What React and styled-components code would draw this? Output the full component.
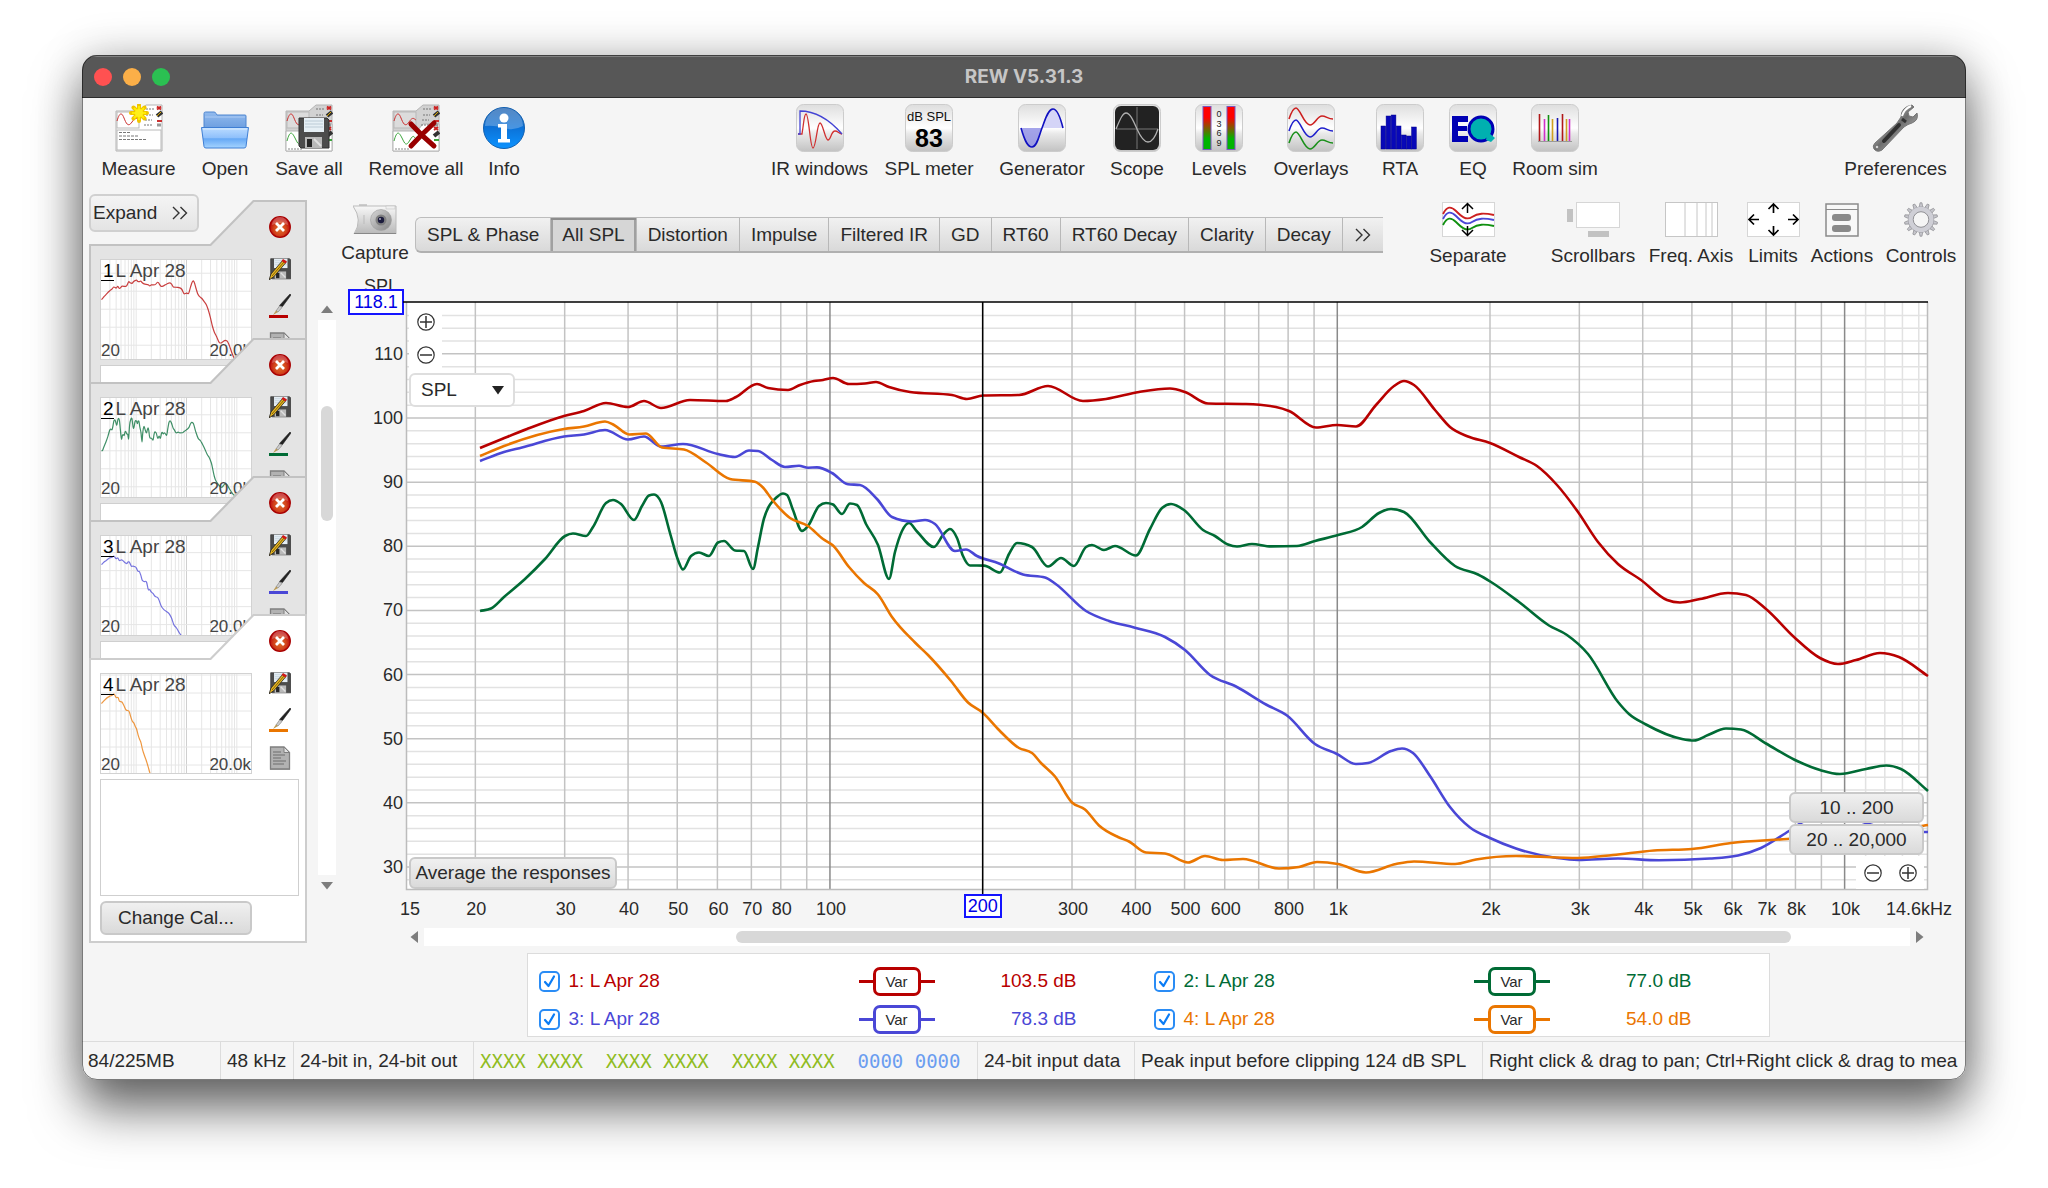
import React, { useState } from 'react';
import styled, { createGlobalStyle } from 'styled-components';

const RED = '#b80000';
const GREEN = '#006b35';
const BLUE = '#4a47d6';
const ORANGE = '#ea7600';

// plot space: three decades from 14.6 Hz to 14.6 kHz, 118.1 dB at the top
const PLOT_W = 1522;
const PLOT_H = 588;
const DECADE = PLOT_W / 3;
const F_START = Math.log10(14.6);
const xOf = (hz) => (Math.log10(hz) - F_START) * DECADE;
const yOf = (db) => 116 + (100 - db) * 6.414;

const traces = {
    red: [[74, 146], [96, 137], [121, 127], [158, 114], [178, 109], [200, 101], [222, 105], [238, 99], [255, 106], [284, 98], [320, 99], [330, 95], [351, 82], [362, 86], [382, 88], [394, 83], [408, 79], [417, 78], [427, 76], [443, 82], [459, 81.5], [470, 80], [483, 85], [504, 90], [546, 93], [561, 97], [577, 93.5], [613, 93], [642, 84], [677, 99], [700, 97], [733, 90], [764, 86.5], [779, 90], [802, 101.5], [840, 102], [870, 105], [883, 109], [910, 125.5], [931, 123], [950, 124.5], [970, 103], [988, 84], [998, 79], [1008, 83], [1029, 108], [1044, 125], [1062, 134.5], [1084, 141], [1113, 155], [1131, 164], [1151, 183], [1172, 210], [1192, 240], [1212, 262], [1235, 278], [1261, 298], [1274, 300.5], [1294, 297], [1322, 291], [1340, 293], [1360, 307], [1388, 335], [1414, 356], [1432, 362], [1450, 358], [1474, 351], [1493, 355], [1522, 374]],
    green: [[74, 309], [85, 306.5], [98, 295], [119, 277], [139, 257], [159, 234], [167, 231.5], [180, 234], [187, 225], [200, 201], [207, 198], [215, 202], [228, 218], [236, 204], [243, 193.5], [248, 192.5], [255, 200], [264, 231], [272, 258], [277, 267.5], [285, 254], [293, 250.5], [303, 254], [312, 240.5], [318, 239], [329, 248.5], [338, 249], [347, 267], [352, 245], [358, 216.5], [371, 195], [377, 191.5], [381, 193], [387, 208], [396, 229], [402, 224], [413, 204], [420, 201], [427, 202.5], [436, 212], [444, 201.5], [451, 203], [460, 222], [472, 243], [483, 277], [489, 250], [496, 229], [503, 221], [511, 229.5], [528, 245], [537, 233], [544, 227], [551, 236], [557, 254], [564, 263.5], [578, 263.6], [594, 270.5], [603, 252], [611, 241], [626, 245], [642, 264.5], [655, 256], [668, 264], [680, 245], [686, 243], [698, 248], [709, 244], [730, 253.5], [744, 227], [756, 206], [765, 202], [778, 208], [797, 228], [809, 234], [822, 242.5], [831, 244.5], [846, 242], [865, 244.4], [891, 244], [909, 239], [932, 233], [956, 225], [973, 211], [985, 207], [998, 210], [1024, 240], [1049, 264], [1072, 272.5], [1085, 280], [1113, 300], [1143, 323.5], [1161, 333], [1182, 352], [1212, 400], [1223, 412], [1240, 422.5], [1276, 437], [1288, 438.5], [1302, 433], [1320, 426.5], [1335, 427.5], [1360, 441.5], [1388, 457.5], [1414, 468], [1434, 472], [1460, 467], [1480, 463.5], [1495, 467], [1522, 489]],
    blue: [[74, 159], [98, 150], [116, 145.5], [158, 134.5], [178, 132.5], [199, 128], [222, 137.5], [238, 134.5], [255, 144.5], [277, 142], [312, 152], [329, 155], [343, 148.5], [352, 149], [366, 158], [379, 165], [393, 163.7], [402, 165.7], [411, 165.4], [426, 171], [442, 182.3], [454, 183], [471, 197], [486, 215], [506, 219.5], [519, 218], [529, 222], [549, 249], [560, 247.5], [571, 254], [593, 261.5], [617, 272.5], [639, 275.5], [649, 281.5], [680, 309], [703, 319], [728, 325.5], [759, 335], [779, 348], [804, 373], [830, 384.5], [860, 402.5], [881, 413.5], [909, 442], [931, 452], [950, 462], [962, 461], [985, 449], [996, 446.5], [1007, 451], [1024, 474], [1044, 505], [1064, 525.5], [1084, 536], [1110, 546.5], [1151, 556], [1172, 558], [1212, 556.5], [1253, 558.3], [1304, 556.5], [1332, 553.5], [1355, 546], [1383, 529], [1401, 518], [1432, 513], [1460, 521], [1488, 529], [1522, 530]],
    orange: [[74, 154], [98, 144], [158, 127], [178, 124.5], [199, 119.5], [208, 123], [223, 132.5], [240, 131.5], [256, 145.5], [278, 147.5], [300, 160.5], [324, 177], [349, 179.7], [357, 185.5], [366, 197.5], [384, 216], [402, 224], [417, 237], [427, 243.5], [443, 265], [458, 281], [472, 292.5], [486, 315], [509, 340.5], [522, 353], [545, 379], [562, 400.5], [577, 411], [593, 428], [613, 446], [626, 451], [635, 461], [649, 474.5], [666, 500.5], [679, 507.5], [693, 523.5], [712, 535], [723, 539.5], [740, 550.5], [759, 551.5], [782, 560.5], [799, 554], [817, 558], [837, 557], [873, 566.5], [893, 565], [911, 560], [932, 562], [960, 570.5], [990, 562], [1008, 559.5], [1049, 562], [1070, 557.5], [1110, 554], [1172, 556], [1207, 553], [1248, 548.5], [1286, 547], [1325, 541], [1381, 537], [1437, 532.5], [1488, 528], [1522, 523]],
};

const measurements = [
    { id: 1, name: 'L Apr 28', color: RED, points: traces.red, value: '103.5 dB' },
    { id: 2, name: 'L Apr 28', color: GREEN, points: traces.green, value: '77.0 dB' },
    { id: 3, name: 'L Apr 28', color: BLUE, points: traces.blue, value: '78.3 dB' },
    { id: 4, name: 'L Apr 28', color: ORANGE, points: traces.orange, value: '54.0 dB' },
];

const xLabels = [
    [14.8, '15'], [20, '20'], [30, '30'], [40, '40'], [50, '50'], [60, '60'], [70, '70'], [80, '80'], [100, '100'],
    [300, '300'], [400, '400'], [500, '500'], [600, '600'], [800, '800'], [1000, '1k'], [2000, '2k'], [3000, '3k'],
    [4000, '4k'], [5000, '5k'], [6000, '6k'], [7000, '7k'], [8000, '8k'], [10000, '10k'], [13950, '14.6kHz'],
];

const tabs = ['SPL & Phase', 'All SPL', 'Distortion', 'Impulse', 'Filtered IR', 'GD', 'RT60', 'RT60 Decay', 'Clarity', 'Decay'];

// monotone cubic, so the peaks stay where the points are
const smoothPath = (pts) => {
    const n = pts.length;
    const h = [];
    const slope = [];
    for (let i = 0; i < n - 1; i++) {
        h.push(pts[i + 1][0] - pts[i][0]);
        slope.push((pts[i + 1][1] - pts[i][1]) / h[i]);
    }
    const m = pts.map((_, i) => {
        if (i === 0) return slope[0];
        if (i === n - 1) return slope[n - 2];
        const a = slope[i - 1];
        const b = slope[i];
        const p = (a * h[i] + b * h[i - 1]) / (h[i - 1] + h[i]);
        return (Math.sign(a) + Math.sign(b)) * Math.min(Math.abs(a), Math.abs(b), Math.abs(p) / 2);
    });
    let d = `M${pts[0][0]} ${pts[0][1]}`;
    for (let i = 0; i < n - 1; i++) {
        const t = h[i] / 3;
        d += `C${pts[i][0] + t} ${pts[i][1] + m[i] * t} ${pts[i + 1][0] - t} ${pts[i + 1][1] - m[i + 1] * t} ${pts[i + 1][0]} ${pts[i + 1][1]}`;
    }
    return d;
};

/* ---------- icons ---------- */

const Tile = ({ children }) => (
    <svg width="48" height="48" viewBox="0 0 48 48">
        <defs>
            <linearGradient id="tile" x1="0" y1="0" x2="0" y2="1">
                <stop offset="0" stopColor="#dedede" />
                <stop offset=".5" stopColor="#ffffff" />
                <stop offset=".62" stopColor="#e9e9e9" />
                <stop offset="1" stopColor="#c2c2c2" />
            </linearGradient>
        </defs>
        <rect x=".5" y=".5" width="47" height="47" rx="7" fill="url(#tile)" stroke="#cccccc" />
        {children}
    </svg>
);

const PanelArt = ({ gray }) => (
    <>
        <path d="M1 7H24L31 1H47V47H1Z" fill={gray ? '#d2d2d2' : '#fff'} stroke="#b4b4b4" />
        {gray && <path d="M1 27H25L31 20H47V47H1Z" fill="#fff" stroke="#b4b4b4" />}
        <rect x="2" y="8" width="22" height="16" fill={gray ? '#dcdcdc' : '#fff'} stroke="#b9b9b9" />
        <path d="M2 17C5 7 7 9 9 14S13 24 17 18S22 15 24 16" fill="none" stroke="#cc3030" />
        <g stroke="#777" strokeWidth="1">
            <path d="M31 5h8M31 11h7M30 16h7M29 21h8" strokeDasharray="2 1" />
        </g>
        <g strokeWidth="2">
            <path d="M42 2.500l4 3M46 2.500l-4 3" stroke="#cc2020" />
            <path d="M42 12l5-4" stroke="#333" strokeWidth="4" />
            <path d="M42 12l4-4" stroke="#d9a800" strokeWidth="1" />
            <path d="M42 17h5" stroke="#cc3030" />
            <path d="M42 21h4" stroke="#999" strokeWidth="3" />
        </g>
        {gray ? (
            <>
                <path d="M2 37C5 26 7 28 10 34S14 43 18 36S22 34 24 35" fill="none" stroke="#3ba53b" />
                <path d="M3 45h14" stroke="#888" strokeDasharray="2 1" />
                <path d="M42 23l4 3M46 23l-4 3" stroke="#cc2020" strokeWidth="2" />
                <path d="M42 32l5-4" stroke="#333" strokeWidth="4" />
                <path d="M42 36h5" stroke="#3ba53b" strokeWidth="2" />
            </>
        ) : (
            <>
                <rect x="2" y="26" width="44" height="20" fill="#fff" stroke="#b9b9b9" />
                <path d="M4 28.500h12M4 32h19M4 35.500h28" stroke="#777" strokeDasharray="3 1" />
            </>
        )}
    </>
);

const MeasureIcon = () => (
    <svg width="48" height="48" viewBox="0 0 48 48">
        <PanelArt />
        <path d="M24 1v16M16 9h16M18.500 3.500l11 11M29.500 3.500l-11 11" stroke="#f0c400" strokeWidth="4" strokeLinecap="round" />
        <path d="M24 2v14M17 9h14M19 4l10 10M29 4L19 14" stroke="#ffee00" strokeWidth="2" />
        <circle cx="24" cy="9" r="4" fill="#fff01a" />
    </svg>
);

const OpenIcon = () => (
    <svg width="48" height="48" viewBox="0 0 48 48">
        <defs>
            <linearGradient id="folder" x1="0" y1="0" x2="0" y2="1">
                <stop offset="0" stopColor="#bcdcff" />
                <stop offset=".5" stopColor="#8fc0fb" />
                <stop offset=".55" stopColor="#66a8f5" />
                <stop offset="1" stopColor="#a5d4ff" />
            </linearGradient>
            <linearGradient id="folderBack" x1="0" y1="0" x2="0" y2="1">
                <stop offset="0" stopColor="#93bbee" />
                <stop offset="1" stopColor="#6d9fe0" />
            </linearGradient>
        </defs>
        <path d="M3 24V9.500Q3 8 4.500 8H13Q14.500 8 15 9.500L16 11H44Q45 11 45 12V24Z" fill="url(#folderBack)" stroke="#4f86d0" />
        <path d="M4 13H44" stroke="#abcbf5" />
        <path d="M.5 23.500H47.500L45 42.500Q44.800 44 43 44H5Q3.200 44 3 42.500Z" fill="url(#folder)" stroke="#3e7ed4" />
        <path d="M2 25H46" stroke="#d9ecff" strokeWidth="1" />
    </svg>
);

const Floppy = ({ x = 0, y = 0, s = 32 }) => (
    <g transform={`translate(${x} ${y}) scale(${s / 32})`}>
        <path d="M1 1H29L31 3V31H3L1 29Z" fill="#4c4c4c" stroke="#303030" />
        <rect x="6" y="1" width="20" height="14" fill="#e6eff5" />
        <path d="M7 4H25M7 7H25M7 10H25" stroke="#bccbd6" />
        <rect x="7" y="20" width="17" height="11" fill="#b9b9b9" />
        <rect x="9" y="22" width="5" height="8" fill="#262626" />
        <path d="M16 22l7 7" stroke="#e0e0e0" strokeWidth="2" />
    </g>
);

const SaveIcon = () => (
    <svg width="48" height="48" viewBox="0 0 48 48">
        <PanelArt gray />
        <Floppy x={13} y={13} s={32} />
    </svg>
);

const RemoveIcon = () => (
    <svg width="48" height="48" viewBox="0 0 48 48">
        <PanelArt gray />
        <path d="M19 20Q30 32 42 42M42 19Q31 29 19 42" fill="none" stroke="#990000" strokeWidth="5" strokeLinecap="round" />
    </svg>
);

const InfoIcon = () => (
    <svg width="48" height="48" viewBox="0 0 48 48">
        <defs>
            <linearGradient id="info" x1="0" y1="0" x2="0" y2="1">
                <stop offset="0" stopColor="#1c5fae" />
                <stop offset=".5" stopColor="#0c72d8" />
                <stop offset="1" stopColor="#0c93ff" />
            </linearGradient>
        </defs>
        <circle cx="24" cy="24" r="20.500" fill="url(#info)" stroke="#1260b0" />
        <path d="M5 22A19 18 0 0 1 43 22Q34 27 24 24T5 22Z" fill="#fff" opacity=".25" />
        <circle cx="24" cy="14" r="4.500" fill="#fff" />
        <path d="M18 20H27V35H30V38.500H18V35H21V23.500H18Z" fill="#fff" />
    </svg>
);

const IrIcon = () => (
    <Tile>
        <path d="M2 30H6C8 18 8 10 10 10C13 10 14 44 17 44C20 44 21 19 24 19C27 19 29 36 32 36C35 36 35 27 39 27C42 27 42 29 46 30" fill="none" stroke="#d03030" strokeWidth="1.300" />
        <path d="M2 30H4V7C20 7 33 15 46 30" fill="none" stroke="#4444d4" strokeWidth="1.300" />
    </Tile>
);

const SplIcon = () => (
    <Tile>
        <text x="24" y="17" textAnchor="middle" fontSize="13" fill="#111">dB SPL</text>
        <text x="24" y="43" textAnchor="middle" fontSize="25" fontWeight="700" fill="#000">83</text>
    </Tile>
);

const GeneratorIcon = () => (
    <Tile>
        <path d="M3 24C7 38 10 43 14 43C19 43 21 32 24 24Z" fill="#8f8fe6" opacity=".8" />
        <path d="M24 24C27 14 30 5 35 5C39 5 42 12 45 24Z" fill="#d4d4f7" />
        <path d="M3 24C7 38 10 43 14 43C19 43 21 32 24 24S30 5 35 5C39 5 42 12 45 24" fill="none" stroke="#1010c0" strokeWidth="1.600" />
    </Tile>
);

const ScopeIcon = () => (
    <Tile>
        <rect x="2" y="2" width="44" height="44" rx="6" fill="#222" />
        <path d="M24 3V45M3 25H45" stroke="#777" />
        <path d="M3 25C8 13 10 9 13 9C17 9 20 16 24 25S31 38 35 38C39 38 42 34 45 25" fill="none" stroke="#b0b0b0" strokeWidth="1.300" />
    </Tile>
);

const LevelsIcon = () => (
    <Tile>
        <defs>
            <linearGradient id="level" x1="0" y1="0" x2="0" y2="1">
                <stop offset=".25" stopColor="#ff0000" />
                <stop offset=".75" stopColor="#00b400" />
            </linearGradient>
        </defs>
        <rect x="8" y="2.500" width="8" height="43" fill="url(#level)" stroke="#7a55c0" />
        <rect x="32" y="2.500" width="8" height="43" fill="url(#level)" stroke="#7a55c0" />
        <g fontSize="9" fill="#222" textAnchor="middle">
            <text x="24" y="13">0</text>
            <text x="24" y="23">3</text>
            <text x="24" y="32">6</text>
            <text x="24" y="42">9</text>
        </g>
    </Tile>
);

const OverlaysIcon = () => (
    <Tile>
        {[['#cc2020', 0], ['#2020cc', 12], ['#1a901a', 24]].map(([c, dy]) => (
            <path key={c} d={`M2 ${15 + dy}C5 ${6 + dy} 7 ${4 + dy} 9 ${4 + dy}C13 ${4 + dy} 17 ${21 + dy} 23 ${21 + dy}C28 ${21 + dy} 30 ${12 + dy} 35 ${12 + dy}C39 ${12 + dy} 41 ${15 + dy} 46 ${15 + dy}`} fill="none" stroke={c} strokeWidth="1.600" />
        ))}
    </Tile>
);

const RtaIcon = () => (
    <Tile>
        {[22, 12, 11, 22, 31, 32, 23].map((top, i) => (
            <rect key={i} x={5 + i * 5.1} y={top} width="4.700" height={45 - top} fill="#0808b8" stroke="#00008c" strokeWidth=".5" />
        ))}
    </Tile>
);

const EqIcon = () => (
    <Tile>
        <path d="M3 12H19V18H9V22H18V27H9V32H19V38H3Z" fill="#0000b4" />
        <circle cx="32" cy="25" r="12" fill="#00b0b0" stroke="#0000b4" strokeWidth="3" />
        <path d="M38 31l2-2 6 5-4 4-5-2z" fill="#00b0b0" />
    </Tile>
);

const RoomIcon = () => (
    <Tile>
        <path d="M7 37.500H41" stroke="#999" />
        {[[8, 10, '#b01818'], [13, 15, '#d030c8'], [17, 11, '#109010'], [21, 15, '#d0a020'], [26, 14, '#1818b0'], [31, 10, '#b01818'], [35, 15, '#d0a020'], [38, 15, '#d030c8']].map(([x, y, c]) => (
            <path key={x} d={`M${x}.500 ${y}V37`} stroke={c} strokeWidth="1.600" />
        ))}
    </Tile>
);

const WrenchIcon = () => (
    <svg width="48" height="48" viewBox="0 0 48 48">
        <defs>
            <linearGradient id="wrench" x1="0" y1="0" x2="1" y2="1">
                <stop offset=".2" stopColor="#d8d8d8" />
                <stop offset=".5" stopColor="#6c6c6c" />
                <stop offset=".8" stopColor="#b4b4b4" />
            </linearGradient>
        </defs>
        <path d="M29 13Q29 3 40 1L42 3L36 8L37 12L41 13L45 9Q47 16 40 19Q36 20 32 23L10 46Q5 49 2 45Q0 42 3 39L25 19Z" fill="url(#wrench)" stroke="#777" />
        <path d="M27 21L12 37" stroke="#303030" strokeWidth="4" strokeLinecap="round" />
        <path d="M30 12Q32 5 39 2" stroke="#fff" strokeWidth="2" fill="none" />
        <path d="M30 15l4 3" stroke="#333" strokeWidth="3" />
        <circle cx="5" cy="43" r="1.500" fill="#fff" stroke="#777" />
    </svg>
);

const CameraIcon = () => (
    <svg width="44" height="30" viewBox="0 0 44 30">
        <defs>
            <linearGradient id="cam" x1="0" y1="0" x2="0" y2="1">
                <stop offset="0" stopColor="#f8f8f8" />
                <stop offset="1" stopColor="#b8b8b8" />
            </linearGradient>
            <linearGradient id="lens" x1="0" y1="0" x2="1" y2="1">
                <stop offset="0" stopColor="#d8d8d8" />
                <stop offset="1" stopColor="#858585" />
            </linearGradient>
        </defs>
        <rect x="6" y="0" width="8" height="3" fill="#ccc" />
        <path d="M0 2H43V30H1Q10 16 0 2Z" fill="url(#cam)" stroke="#bbb" />
        <path d="M1 29.500H43" stroke="#888" />
        <path d="M11 11V20" stroke="#bbb" />
        <rect x="33" y="2" width="9" height="3" fill="#f0f0f0" stroke="#bbb" strokeWidth=".5" />
        <circle cx="28" cy="16" r="10.500" fill="url(#lens)" stroke="#a0a0a0" strokeWidth=".6" />
        <circle cx="28" cy="16" r="5.500" fill="#808080" />
        <circle cx="28" cy="16" r="3.200" fill="#1c1c3c" />
        <circle cx="27" cy="15" r="1" fill="#aab" />
    </svg>
);

const SeparateIcon = () => (
    <svg width="53" height="35" viewBox="0 0 53 35">
        <rect x=".5" y=".5" width="52" height="34" fill="#fff" stroke="#d6d6d6" />
        {[['#cc2020', 0], [BLUE, 5], ['#109010', 11]].map(([c, dy]) => (
            <path key={c} d={`M1 ${12 + dy}C5 ${4 + dy} 9 ${4 + dy} 14 ${9 + dy}C19 ${14 + dy} 24 ${19 + dy} 30 ${15 + dy}C36 ${11 + dy} 42 ${11 + dy} 52 ${13 + dy}`} fill="none" stroke={c} strokeWidth="1.800" />
        ))}
        <path d="M25.500 11V2M20 7l5.500-5.500L31 7M25.500 24V33M20 28l5.500 5.500L31 28" fill="none" stroke="#000" strokeWidth="1.500" />
    </svg>
);

const ScrollbarsIcon = () => (
    <svg width="53" height="35" viewBox="0 0 53 35">
        <rect x="9.500" y=".5" width="43" height="25" fill="#fff" stroke="#d6d6d6" />
        <rect x="0" y="7" width="6" height="13" fill="#c2c2c2" />
        <rect x="21" y="29" width="21" height="6" fill="#c2c2c2" />
    </svg>
);

const FreqIcon = () => (
    <svg width="53" height="35" viewBox="0 0 53 35">
        <rect x=".5" y=".5" width="52" height="34" fill="#fff" stroke="#c6c6c6" />
        <path d="M20 0V35M32 0V35M41 0V35M47 0V35" stroke="#c6c6c6" />
    </svg>
);

const LimitsIcon = () => (
    <svg width="53" height="35" viewBox="0 0 53 35">
        <rect x=".5" y=".5" width="52" height="34" fill="#fff" stroke="#d6d6d6" />
        <path d="M26.500 11V2M21.500 7l5-5 5 5M26.500 24V33M21.500 28l5 5 5-5M12 17.500H2M7 12.500l-5 5 5 5M41 17.500H51M46 12.500l5 5-5 5" fill="none" stroke="#000" strokeWidth="1.700" />
    </svg>
);

const ActionsIcon = () => (
    <svg width="34" height="35" viewBox="0 0 34 35">
        <rect x="1" y="2" width="32" height="32" fill="#f8f8f8" stroke="#8a8a8a" strokeWidth="1.500" />
        <path d="M1 7.500H33" stroke="#8a8a8a" />
        <rect x="7" y="12" width="19" height="7" rx="3" fill="#8a8a8a" />
        <rect x="7" y="23" width="19" height="7" rx="3" fill="#8a8a8a" />
    </svg>
);

const GearIcon = () => (
    <svg width="36" height="35" viewBox="0 0 36 36">
        {Array.from({ length: 14 }, (_, i) => (
            <path key={i} d="M16 6L17 .8H19L20 6Z" fill="#c6c6cc" stroke="#8c8c90" strokeWidth=".7" transform={`rotate(${(i * 360) / 14} 18 18)`} />
        ))}
        <circle cx="18" cy="18" r="10.500" fill="none" stroke="#96969c" strokeWidth="6" />
        <circle cx="18" cy="18" r="10.500" fill="none" stroke="#cfcfd6" strokeWidth="5" />
        <circle cx="18" cy="18" r="8" fill="#f5f5f5" stroke="#8e8e94" />
    </svg>
);

const CloseIcon = () => (
    <svg width="22" height="22" viewBox="0 0 22 22">
        <defs>
            <radialGradient id="close" cx=".5" cy=".6" r=".5">
                <stop offset="0" stopColor="#e0712a" />
                <stop offset=".6" stopColor="#d2441c" />
                <stop offset="1" stopColor="#bd0e0e" />
            </radialGradient>
        </defs>
        <circle cx="11" cy="11" r="10.300" fill="url(#close)" stroke="#a80000" strokeWidth="1.300" />
        <path d="M3 9A8 8 0 0 1 19 9Q11 5 3 9Z" fill="#fff" opacity=".25" />
        <path d="M7 7l8 8M15 7l-8 8" stroke="#fff" strokeWidth="2.800" />
    </svg>
);

const SaveAsIcon = () => (
    <svg width="22" height="22" viewBox="0 0 22 22">
        <Floppy x={1} y={0} s={21.500} />
        <path d="M0 22l2-6L14 2l3 2.500L5 18.500Z" fill="#e6b422" stroke="#222" strokeWidth=".8" />
        <path d="M3 18L15 4" stroke="#6b5200" strokeWidth=".8" />
        <path d="M12.500 3l1.500-2 4 2.500-1.500 2z" fill="#d01818" />
    </svg>
);

const BrushIcon = ({ color }) => (
    <svg width="22" height="24" viewBox="0 0 22 24">
        <path d="M21 0L22 1L13.500 12.500L10.500 11.500Z" fill="#222" stroke="#222" strokeWidth=".6" />
        <path d="M10.500 12l2.500 1.500-4 4.500-2-1z" fill="#ccc" stroke="#777" strokeWidth=".6" />
        <path d="M7 16.500l2 1.500-5 3z" fill="#b99a55" />
        <rect x="0" y="21" width="19" height="3" fill={color} />
    </svg>
);

const NotesIcon = () => (
    <svg width="22" height="24" viewBox="0 0 22 24">
        <path d="M1.500 1H15L20.500 6.500V23H1.500Z" fill="#b2b2b2" stroke="#7f7f7f" strokeWidth="1.300" />
        <path d="M15 1V6.500H20.500Z" fill="#e2e2e2" stroke="#7f7f7f" />
        <path d="M4 6h8M4 9h12M4 12h8M4 15h13M4 18h11" stroke="#6c6c6c" />
        <path d="M1 23.500H21" stroke="#8c8c8c" />
    </svg>
);

const ZoomGlyph = ({ plus }) => (
    <svg width="18" height="18" viewBox="0 0 18 18">
        <circle cx="9" cy="9" r="8.200" fill="#fff" stroke="#333" strokeWidth="1.200" />
        <path d={plus ? 'M3 9H15M9 3V15' : 'M3 9H15'} stroke="#333" strokeWidth="1.500" />
    </svg>
);

const Chevrons = () => (
    <svg width="16" height="14" viewBox="0 0 16 14">
        <path d="M1 1l6 6-6 6M8.500 1l6 6-6 6" fill="none" stroke="#333" strokeWidth="1.400" />
    </svg>
);

const Triangle = ({ dir }) => (
    <svg width="12" height="12" viewBox="0 0 12 12">
        <path d="M0 10L6 2.500L12 10Z" fill="#7d7d7d" transform={`rotate(${{ up: 0, right: 90, down: 180, left: 270 }[dir]} 6 6)`} />
    </svg>
);

/* ---------- parts ---------- */

const leftTools = [
    ['Measure', MeasureIcon, 87], ['Open', OpenIcon, 86], ['Save all', SaveIcon, 82], ['Remove all', RemoveIcon, 132], ['Info', InfoIcon, 44],
];
const centreTools = [
    ['IR windows', IrIcon, 111], ['SPL meter', SplIcon, 108], ['Generator', GeneratorIcon, 118], ['Scope', ScopeIcon, 72], ['Levels', LevelsIcon, 92],
    ['Overlays', OverlaysIcon, 92], ['RTA', RtaIcon, 86], ['EQ', EqIcon, 60], ['Room sim', RoomIcon, 104],
];
const graphTools = [
    ['Scrollbars', ScrollbarsIcon, 90], ['Freq. Axis', FreqIcon, 106], ['Limits', LimitsIcon, 58], ['Actions', ActionsIcon, 80], ['Controls', GearIcon, 78],
];

const Tool = ({ label, icon: Icon, width, small }) => (
    <ToolButton type="button" $width={width} $small={small}>
        <Icon />
        <span>{label}</span>
    </ToolButton>
);

const Card = ({ m, open }) => (
    <CardEdge $open={open}>
        <CardBody $open={open}>
            <CardMain>
                <Thumb>
                    <ThumbPlot m={m} />
                    <ThumbTitle><b>{m.id}</b>{m.name}</ThumbTitle>
                    <ThumbRange><span>20</span><span>20.0k</span></ThumbRange>
                </Thumb>
                <Notes aria-label={`Notes for measurement ${m.id}`} />
                {open && <PushButton type="button" $width={152} $height={34}>Change Cal...</PushButton>}
            </CardMain>
            <CardIcons>
                <IconButton type="button" aria-label="Remove" $height={28}><CloseIcon /></IconButton>
                <IconButton type="button" aria-label="Save" $height={22}><SaveAsIcon /></IconButton>
                <IconButton type="button" aria-label="Trace colour" $height={24}><BrushIcon color={m.color} /></IconButton>
                <IconButton type="button" aria-label="Notes" $height={24}><NotesIcon /></IconButton>
            </CardIcons>
        </CardBody>
    </CardEdge>
);

// each thumbnail is shifted so that its own peak sits just under the title
const ThumbPlot = ({ m }) => {
    const peak = Math.min(...m.points.map((p) => p[1]));
    const tx = (x) => (x - 69.3) * 0.0992;
    const ty = (y) => 20 + (y - peak) * 0.2806;
    const lines = [10, 100, 1000, 10000].flatMap((d) => [1, 2, 3, 4, 5, 6, 7, 8, 9].map((k) => d * k)).filter((f) => f > 20 && f <= 10000);
    return (
        <svg width="150" height="99" viewBox="0 0 150 99">
            <g stroke="#e6e6e6">
                {lines.map((f) => <path key={f} d={`M${tx(xOf(f))} 0V99`} stroke={f === 1000 ? '#cfcfcf' : undefined} />)}
                {[110, 100, 90, 80, 70, 60, 50, 40].map((db) => <path key={db} d={`M0 ${ty(yOf(db))}H150`} />)}
            </g>
            <path d={smoothPath(m.points.map(([x, y]) => [tx(x), ty(y)]))} fill="none" stroke={m.color} strokeOpacity=".75" strokeWidth="1.200" />
        </svg>
    );
};

const Plot = () => {
    const minor = [];
    for (let db = 28; db < 118; db += 2) if (db % 10) minor.push(db);
    const freqs = [10, 100, 1000].flatMap((d) => [2, 3, 4, 5, 6, 7, 8, 9].map((k) => d * k));
    return (
        <PlotSvg viewBox={`0 0 ${PLOT_W} ${PLOT_H}`} preserveAspectRatio="none">
            <rect width={PLOT_W} height={PLOT_H} fill="#fff" />
            <g stroke="#e2e2e2" strokeWidth="1.500">
                {minor.map((db) => <path key={db} d={`M0 ${yOf(db)}H${PLOT_W}`} />)}
                {[11000, 12000, 13000, 14000].map((f) => <path key={f} d={`M${xOf(f)} 0V${PLOT_H}`} />)}
            </g>
            <g stroke="#c3c3c3" strokeWidth="1.500">
                {[30, 40, 50, 60, 70, 80, 90, 100, 110].map((db) => <path key={db} d={`M0 ${yOf(db)}H${PLOT_W}`} />)}
                {freqs.map((f) => <path key={f} d={`M${xOf(f)} 0V${PLOT_H}`} />)}
            </g>
            <g stroke="#8a8a8a" strokeWidth="1.500">
                {[100, 1000, 10000].map((f) => <path key={f} d={`M${xOf(f)} 0V${PLOT_H}`} />)}
            </g>
            <path d={`M.5 0V${PLOT_H - 0.5}H${PLOT_W - 0.5}V0`} fill="none" stroke="#bcbcbc" strokeWidth="1.500" />
            {measurements.map((m) => (
                <path key={m.id} d={smoothPath(m.points)} fill="none" stroke={m.color} strokeWidth="2.600" strokeLinejoin="round" />
            ))}
            <path d={`M-3 0H${PLOT_W}M${xOf(200)} 0V594`} stroke="#000" strokeWidth="1.500" />
        </PlotSvg>
    );
};

const LegendItem = ({ m }) => {
    const [on, setOn] = useState(true);
    return (
        <LegendRow $color={m.color}>
            <LegendLabel>
                <CheckWrap>
                    <Check type="checkbox" checked={on} onChange={() => setOn(!on)} />
                    {on && (
                        <svg width="21" height="21" viewBox="0 0 21 21">
                            <path d="M6 11l3.500 4L15 5.500" fill="none" stroke="#0a7cf5" strokeWidth="2.200" strokeLinecap="round" strokeLinejoin="round" />
                        </svg>
                    )}
                </CheckWrap>
                {m.id}: {m.name}
            </LegendLabel>
            <VarButton type="button"><span>Var</span></VarButton>
            <LegendValue>{m.value}</LegendValue>
        </LegendRow>
    );
};

const App = () => (
    <>
        <GlobalStyle />
        <AppWindow>
            <TitleBar>
                <Lights>
                    <Light $color="#ff5151" />
                    <Light $color="#fbaf48" />
                    <Light $color="#2bc052" />
                </Lights>
                <Title>REW V5.31.3</Title>
            </TitleBar>

            <Toolbar>
                <ToolGroup>{leftTools.map(([l, i, w]) => <Tool key={l} label={l} icon={i} width={w} />)}</ToolGroup>
                <ToolGroup>{centreTools.map(([l, i, w]) => <Tool key={l} label={l} icon={i} width={w} />)}</ToolGroup>
                <ToolGroup><Tool label="Preferences" icon={WrenchIcon} width={101} /></ToolGroup>
            </Toolbar>

            <Workspace>
                <Sidebar>
                    <ExpandButton type="button">Expand <Chevrons /></ExpandButton>
                    <Cards>
                        {measurements.map((m, i) => <Card key={m.id} m={m} open={i === 3} />)}
                    </Cards>
                </Sidebar>
                <SideScroll>
                    <Triangle dir="up" />
                    <SideTrack><SideThumb /></SideTrack>
                    <Triangle dir="down" />
                </SideScroll>

                <Main>
                    <GraphBar>
                        <CaptureButton type="button"><CameraIcon /><span>Capture</span></CaptureButton>
                        <Tabs>
                            {tabs.map((t) => <Tab type="button" key={t} $active={t === 'All SPL'}>{t}</Tab>)}
                            <Tab type="button" aria-label="More graphs"><Chevrons /></Tab>
                        </Tabs>
                        <GraphTools>
                            <Tool label="Separate" icon={SeparateIcon} width={80} small />
                            <ToolGroup>{graphTools.map(([l, i, w]) => <Tool key={l} label={l} icon={i} width={w} small />)}</ToolGroup>
                        </GraphTools>
                    </GraphBar>

                    <Graph>
                        <YAxis>
                            <AxisTitle>SPL</AxisTitle>
                            <LimitBox>118.1</LimitBox>
                            {[110, 100, 90, 80, 70, 60, 50, 40, 30].map((db) => (
                                <YLabel key={db} style={{ top: `${(yOf(db) / PLOT_H) * 100}%` }}>{db}</YLabel>
                            ))}
                        </YAxis>
                        <PlotArea>
                            <Plot />
                            <TopLeft>
                                <ZoomButton type="button" aria-label="Zoom in vertically"><ZoomGlyph plus /></ZoomButton>
                                <ZoomButton type="button" aria-label="Zoom out vertically"><ZoomGlyph /></ZoomButton>
                                <AxisSelect>
                                    <select aria-label="Y axis" defaultValue="SPL"><option>SPL</option></select>
                                    <svg width="14" height="9" viewBox="0 0 14 9"><path d="M1 0H13L7 8.500Z" fill="#222" /></svg>
                                </AxisSelect>
                            </TopLeft>
                            <BottomLeft>
                                <PushButton type="button" $width={208} $height={32}>Average the responses</PushButton>
                            </BottomLeft>
                            <BottomRight>
                                <PushButton type="button" $width={135} $height={31}>10 .. 200</PushButton>
                                <PushButton type="button" $width={135} $height={31}>20 .. 20,000</PushButton>
                                <ZoomRow>
                                    <ZoomButton type="button" aria-label="Zoom out"><ZoomGlyph /></ZoomButton>
                                    <ZoomButton type="button" aria-label="Zoom in"><ZoomGlyph plus /></ZoomButton>
                                </ZoomRow>
                            </BottomRight>
                        </PlotArea>
                        <XAxis>
                            {xLabels.map(([f, t]) => (
                                <XLabel key={t} style={{ left: `${(xOf(f) / PLOT_W) * 100}%` }}>{t}</XLabel>
                            ))}
                            <CursorBox style={{ left: `${(xOf(200) / PLOT_W) * 100}%` }}>200</CursorBox>
                        </XAxis>
                    </Graph>

                    <GraphScroll>
                        <Triangle dir="left" />
                        <GraphTrack><GraphThumb /></GraphTrack>
                        <Triangle dir="right" />
                    </GraphScroll>

                    <Legend>
                        {measurements.map((m) => <LegendItem key={m.id} m={m} />)}
                    </Legend>
                </Main>
            </Workspace>

            <StatusBar>
                <StatusCell $width={138}>84/225MB</StatusCell>
                <StatusCell $width={73}>48 kHz</StatusCell>
                <StatusCell $width={180}>24-bit in, 24-bit out</StatusCell>
                <StatusCell $width={504}>
                    <Bits $color="#8fbc22">XXXX XXXX&nbsp; XXXX XXXX&nbsp; XXXX XXXX&nbsp;&nbsp;</Bits>
                    <Bits $color="#6b9df0">0000 0000</Bits>
                </StatusCell>
                <StatusCell $width={157}>24-bit input data</StatusCell>
                <StatusCell $width={348}>Peak input before clipping 124 dB SPL</StatusCell>
                <StatusCell $grow>Right click &amp; drag to pan; Ctrl+Right click &amp; drag to mea</StatusCell>
            </StatusBar>
        </AppWindow>
    </>
);

const GlobalStyle = createGlobalStyle`
*, *::before, *::after { box-sizing: border-box; }
body {
    margin: 0;
    padding: 55px 82px 108px;
    background: #fff;
    color: #2a2a2a;
    font: 19px/22px "Liberation Sans", Arial, sans-serif;
}
button, select, textarea { font: inherit; color: inherit; }
button { padding: 0; border: 0; background: none; white-space: nowrap; }
svg { display: block; flex: none; }
`;

const AppWindow = styled.div`
display: flex;
flex-direction: column;
overflow: hidden;
border-radius: 15px;
background: #f5f5f5;
outline: 1px solid rgba(0, 0, 0, 0.5);
outline-offset: -1px;
box-shadow: 0 0 44px rgba(0, 0, 0, 0.22), 0 30px 50px rgba(0, 0, 0, 0.56);
`;

const TitleBar = styled.header`
display: grid;
grid-template-columns: 1fr auto 1fr;
align-items: center;
height: 43px;
padding: 1px 12px 0;
background: #575757;
box-shadow: inset 0 2px 0 #808080;
border-bottom: 1px solid #2c2c2c;
`;

const Lights = styled.div`
display: flex;
gap: 11px;
`;

const Light = styled.span`
width: 18px;
height: 18px;
border-radius: 50%;
background: ${({ $color }) => $color};
`;

const Title = styled.h1`
margin: 0;
color: #c6c6c6;
font: 700 19px/22px Inter, sans-serif;
`;

const Toolbar = styled.div`
display: flex;
justify-content: space-between;
padding: 6px 20px 14px 13px;
`;

const ToolGroup = styled.div`
display: flex;
`;

const ToolButton = styled.button`
display: flex;
flex-direction: column;
align-items: center;
gap: ${({ $small }) => ($small ? 8 : 6)}px;
width: ${({ $width }) => $width}px;
`;

const Workspace = styled.div`
display: flex;
`;

const Sidebar = styled.aside`
width: 231px;
padding-left: 7px;
`;

const PushButton = styled.button`
width: ${({ $width }) => $width}px;
height: ${({ $height }) => $height}px;
border: 2px solid #c9c9c9;
border-radius: 6px;
background: linear-gradient(#f0f0f0, #dadada);
`;

const ExpandButton = styled.button`
display: flex;
align-items: center;
justify-content: space-between;
width: 110px;
height: 38px;
padding: 0 9px 0 2px;
border: 2px solid #d0d0d0;
border-radius: 6px;
background: linear-gradient(#f4f4f4, #e4e4e4);
`;

const Cards = styled.div`
margin-top: -32px;
`;

// the folder-tab outline is the edge colour showing round a clipped body
const CardEdge = styled.section`
width: 218px;
height: ${({ $open }) => ($open ? 329 : 184)}px;
padding: 2px;
background: ${({ $open }) => ($open ? '#cdcdcd' : '#c2c2c2')};
clip-path: polygon(0 44px, 121px 44px, 164px 0, 100% 0, 100% 100%, 0 100%);

& + & {
    margin-top: -46px;
}
`;

const CardBody = styled.div`
display: flex;
height: 100%;
padding: 57px 8px 0 9px;
overflow: hidden;
background: ${({ $open }) => ($open ? '#ffffff' : '#e4e4e4')};
clip-path: polygon(0 44px, 120px 44px, 163px 0, 100% 0, 100% 100%, 0 100%);
`;

const CardMain = styled.div`
display: flex;
flex: none;
flex-direction: column;
gap: 5px;
width: 152px;
`;

const Thumb = styled.div`
position: relative;
flex: none;
height: 101px;
border: 1px solid #d2d2d2;
background: #fff;
`;

const ThumbTitle = styled.div`
position: absolute;
top: 1px;
left: 0;
display: flex;
gap: 2px;
color: #444;
line-height: 20px;

b {
    height: 20px;
    padding-left: 2px;
    color: #000;
    font-weight: 400;
    border-bottom: 1px solid #000;
}
`;

const ThumbRange = styled.div`
position: absolute;
right: 0;
bottom: -3px;
left: 0;
display: flex;
justify-content: space-between;
color: #444;
font-size: 17px;
`;

const Notes = styled.textarea`
flex: none;
width: 199px;
height: 117px;
padding: 4px;
border: 1px solid #cfcfcf;
background: #fff;
resize: none;
`;

const CardIcons = styled.div`
display: flex;
flex-direction: column;
align-items: center;
gap: 14px;
margin: -43px 0 0 17px;
`;

const IconButton = styled.button`
display: flex;
flex: none;
align-items: flex-start;
height: ${({ $height }) => $height}px;
`;

const SideScroll = styled.div`
display: flex;
flex-direction: column;
align-items: center;
gap: 5px;
width: 27px;
padding-top: 109px;
`;

const SideTrack = styled.div`
width: 18px;
height: 555px;
padding: 86px 3px;
background: #fff;
`;

const SideThumb = styled.div`
height: 115px;
border-radius: 6px;
background: #d8d8d8;
`;

const Main = styled.main`
flex: 1;
min-width: 0;
`;

const GraphBar = styled.div`
display: flex;
align-items: flex-start;
height: 74px;
`;

const CaptureButton = styled.button`
display: flex;
flex-direction: column;
align-items: center;
gap: 8px;
width: 70px;
padding-top: 10px;
`;

const Tabs = styled.nav`
display: flex;
height: 36px;
margin: 23px 0 0 5px;
overflow: hidden;
border: 1px solid #bdbdbd;
border-right: 0;
border-bottom: 2px solid #b0b0b0;
border-radius: 6px 0 0 6px;
background: linear-gradient(#f1f1f1, #d9d9d9);
`;

const Tab = styled.button`
padding: 0 11px;
border-right: 1px solid #b8b8b8;
${({ $active }) => $active && `
background: #d6d6d6;
box-shadow: inset 0 2px 0 #8c8c8c, inset 2px 0 0 #a0a0a0, inset -2px 0 0 #a0a0a0;
`}

&:last-child {
    padding: 0 12px;
    border-right: 0;
}
`;

const GraphTools = styled.div`
display: flex;
gap: 40px;
margin-left: auto;
padding: 8px 6px 0 0;
`;

const Graph = styled.div`
display: grid;
grid-template-columns: 66px 1fr;
grid-template-rows: 588px 28px;
margin: 34px 38px 0 0;
`;

const YAxis = styled.div`
position: relative;
font-size: 18px;
`;

const AxisTitle = styled.div`
position: absolute;
top: -27px;
right: 8px;
`;

const LimitBox = styled.div`
position: absolute;
top: -13px;
right: 2px;
width: 56px;
border: 2px solid #1414ff;
background: #fff;
color: #0000e6;
text-align: center;
`;

const YLabel = styled.div`
position: absolute;
right: 3px;
transform: translateY(-50%);
`;

const PlotArea = styled.div`
position: relative;
`;

const PlotSvg = styled.svg`
width: 100%;
height: 588px;
overflow: visible;
`;

const TopLeft = styled.div`
position: absolute;
top: 3px;
left: 3px;
display: flex;
flex-direction: column;
`;

const ZoomButton = styled.button`
display: flex;
align-items: center;
justify-content: center;
width: 33px;
height: 33px;
background: #fff;
`;

const AxisSelect = styled.div`
position: relative;
margin-top: 2px;

select {
    width: 106px;
    height: 34px;
    padding: 0 10px;
    border: 2px solid #dedede;
    border-radius: 6px;
    background: #fff;
    appearance: none;
}

svg {
    position: absolute;
    top: 13px;
    right: 10px;
    pointer-events: none;
}
`;

const BottomLeft = styled.div`
position: absolute;
bottom: 1px;
left: 3px;
`;

const BottomRight = styled.div`
position: absolute;
right: 4px;
bottom: 1px;
display: flex;
flex-direction: column;
align-items: flex-end;
gap: 1px;
`;

const ZoomRow = styled.div`
display: flex;
gap: 2px;
background: #fff;
`;

const XAxis = styled.div`
position: relative;
grid-column: 2;
font-size: 18px;
`;

const XLabel = styled.div`
position: absolute;
top: 8px;
margin-left: 1px;
transform: translateX(-50%);
`;

const CursorBox = styled.div`
position: absolute;
top: 4px;
width: 38px;
border: 2px solid #1414ff;
background: #fff;
color: #0000e6;
line-height: 20px;
text-align: center;
transform: translateX(-50%);
`;

const GraphScroll = styled.div`
display: flex;
align-items: center;
gap: 4px;
margin: 10px 40px 0 68px;
`;

const GraphTrack = styled.div`
flex: 1;
padding: 3px 0;
background: #fff;
`;

const GraphThumb = styled.div`
width: 71%;
height: 12px;
margin-left: 21%;
border-radius: 6px;
background: #d8d8d8;
`;

const Legend = styled.div`
display: grid;
grid-template-columns: 1fr 1fr;
width: 1243px;
margin: 7px auto 4px;
padding: 8px 0 0 11px;
height: 84px;
border: 1px solid #dcdcdc;
background: #fff;
transform: translateX(-5px);
`;

const LegendRow = styled.div`
display: grid;
grid-template-columns: 320px 76px 142px;
align-items: center;
height: 38px;
color: ${({ $color }) => $color};
`;

const LegendLabel = styled.label`
display: flex;
align-items: center;
gap: 9px;
`;

const CheckWrap = styled.span`
position: relative;
width: 21px;
height: 21px;

svg {
    position: absolute;
    inset: 0;
    pointer-events: none;
}
`;

const Check = styled.input`
display: block;
width: 21px;
height: 21px;
margin: 0;
border: 2px solid #2a8cf5;
border-radius: 5px;
background: #fff;
appearance: none;
`;

// a strip of trace colour runs behind the box
const VarButton = styled.button`
display: flex;
justify-content: center;
width: 76px;
color: inherit;
background: linear-gradient(currentColor, currentColor) center / 100% 3px no-repeat;

span {
    width: 48px;
    height: 29px;
    border: 3px solid;
    border-radius: 7px;
    background: #fff;
    color: inherit;
    font-size: 15px;
    line-height: 24px;
    -webkit-text-fill-color: #2a2a2a;
}
`;

const LegendValue = styled.span`
text-align: right;
`;

const StatusBar = styled.footer`
display: flex;
height: 39px;
border-top: 1px solid #dcdcdc;
`;

const StatusCell = styled.div`
display: flex;
flex: ${({ $grow }) => ($grow ? '1' : 'none')};
align-items: center;
width: ${({ $width }) => ($width ? `${$width}px` : 'auto')};
min-width: 0;
padding: 0 6px;
overflow: hidden;
white-space: nowrap;

& + & {
    border-left: 1px solid #dcdcdc;
}
`;

const Bits = styled.span`
color: ${({ $color }) => $color};
font-family: "DejaVu Sans Mono", "Liberation Mono", monospace;
`;

export default App;
